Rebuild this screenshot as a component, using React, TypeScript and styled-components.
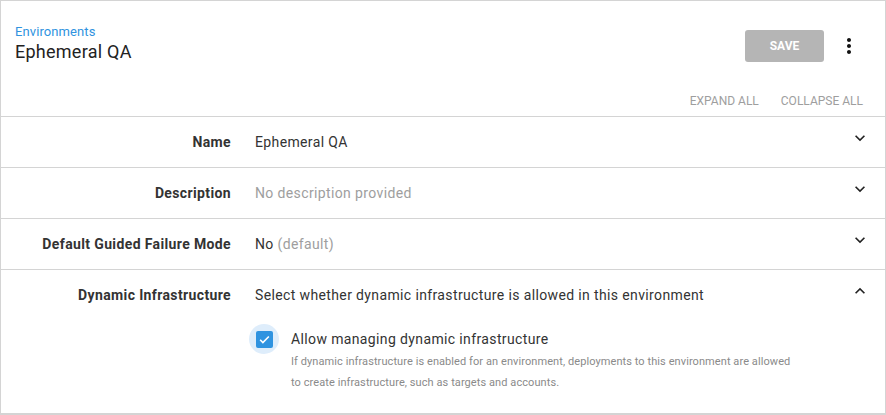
import React from "react";
import styled, { createGlobalStyle } from "styled-components";

const Global = createGlobalStyle`
  html, body { margin: 0; padding: 0; background: #ffffff; }
  body { font-family: Roboto, "Noto Sans", Arial, sans-serif; color: #333333; }
  * { box-sizing: border-box; }
`;

const Card = styled.div`
  width: 886px;
  height: 415px;
  border: 1px solid #d4d4d4;
  border-bottom-width: 2px;
  background: #fff;
  display: flex;
  flex-direction: column;
  overflow: hidden;
`;

const Header = styled.div`
  display: flex;
  align-items: flex-start;
  justify-content: space-between;
  padding: 23px 24px 0 14px;
  height: 85px;
`;

const TitleBlock = styled.div`
  display: flex;
  flex-direction: column;
`;

const Breadcrumb = styled.a`
  font-size: 13px;
  line-height: 16px;
  letter-spacing: 0.1px;
  color: #2f93e0;
  text-decoration: none;
`;

const Title = styled.h1`
  margin: 0;
  font-size: 18px;
  line-height: 24px;
  font-weight: 400;
  letter-spacing: 0.25px;
  color: #222;
`;

const HeaderActions = styled.div`
  display: flex;
  align-items: center;
  gap: 13px;
  margin-top: 6px;
`;

const SaveButton = styled.button`
  width: 79px;
  height: 32px;
  border: none;
  border-radius: 3px;
  background: #b5b5b5;
  color: #fff;
  font-family: Roboto, sans-serif;
  font-weight: 700;
  font-size: 12px;
  letter-spacing: 0;
`;

const IconButton = styled.span`
  width: 24px;
  height: 24px;
  display: flex;
  align-items: center;
  justify-content: center;
  color: #111;
`;

const ActionsBar = styled.div`
  display: flex;
  justify-content: flex-end;
  align-items: center;
  gap: 22px;
  height: 30px;
  padding-right: 22px;
`;

const TextButton = styled.span`
  font-size: 12px;
  color: #9e9e9e;
  text-transform: uppercase;
`;

const Row = styled.div<{ $grow?: boolean }>`
  display: grid;
  grid-template-columns: 230px 1fr 50px;
  border-top: 1px solid #d4d4d4;
  padding: 16px 0;
  flex: ${(p) => (p.$grow ? 1 : "none")};
  letter-spacing: 0.37px;
`;

const Label = styled.div`
  text-align: right;
  font-size: 14px;
  line-height: 18px;
  font-weight: 700;
  color: #333;
`;

const Value = styled.div`
  padding-left: 24px;
  font-size: 14px;
  line-height: 18px;
  color: #333;
`;

const Muted = styled.span`
  color: #9e9e9e;
`;

const Chevron = styled.div`
  display: flex;
  justify-content: center;
  align-items: flex-start;
  height: 18px;
  margin-top: -5px;
  color: #222;
`;

const CheckRow = styled.div`
  display: flex;
  align-items: flex-start;
  margin-top: 20px;
  margin-left: -6px;
`;

const CheckHalo = styled.div`
  width: 30px;
  height: 30px;
  border-radius: 50%;
  background: #deedfb;
  display: flex;
  align-items: center;
  justify-content: center;
  flex: none;
`;

const CheckBox = styled.div`
  width: 17px;
  height: 17px;
  border-radius: 2px;
  background: #2f93e0;
  display: flex;
  align-items: center;
  justify-content: center;
`;

const CheckText = styled.div`
  margin-left: 12px;
  padding-top: 6px;
`;

const CheckLabel = styled.div`
  font-size: 14px;
  line-height: 18px;
  color: #333;
`;

const Help = styled.div`
  margin-top: 3px;
  font-size: 11px;
  line-height: 21px;
  letter-spacing: 0.08px;
  color: #8a8a8a;
  max-width: 503px;
`;

const ChevronDown = () => (
  <svg width="20" height="20" viewBox="0 0 24 24" fill="currentColor">
    <path d="M16.59 8.59L12 13.17 7.41 8.59 6 10l6 6 6-6z" />
  </svg>
);

const ChevronUp = () => (
  <svg width="20" height="20" viewBox="0 0 24 24" fill="currentColor">
    <path d="M12 8l-6 6 1.41 1.41L12 10.83l4.59 4.58L18 14z" />
  </svg>
);

const MoreVert = () => (
  <svg width="24" height="24" viewBox="0 0 24 24" fill="currentColor">
    <path d="M12 8c1.1 0 2-.9 2-2s-.9-2-2-2-2 .9-2 2 .9 2 2 2zm0 2c-1.1 0-2 .9-2 2s.9 2 2 2 2-.9 2-2-.9-2-2-2zm0 6c-1.1 0-2 .9-2 2s.9 2 2 2 2-.9 2-2-.9-2-2-2z" />
  </svg>
);

const Check = () => (
  <svg width="13" height="13" viewBox="0 0 24 24" fill="none" stroke="#fff" strokeWidth="3">
    <path d="M4 12.5l5 5L20 6.5" />
  </svg>
);

export default function App() {
  return (
    <>
      <Global />
      <Card>
        <Header>
          <TitleBlock>
            <Breadcrumb href="#">Environments</Breadcrumb>
            <Title>Ephemeral QA</Title>
          </TitleBlock>
          <HeaderActions>
            <SaveButton>SAVE</SaveButton>
            <IconButton>
              <MoreVert />
            </IconButton>
          </HeaderActions>
        </Header>
        <ActionsBar>
          <TextButton>Expand all</TextButton>
          <TextButton>Collapse all</TextButton>
        </ActionsBar>
        <Row>
          <Label>Name</Label>
          <Value>Ephemeral QA</Value>
          <Chevron>
            <ChevronDown />
          </Chevron>
        </Row>
        <Row>
          <Label>Description</Label>
          <Value>
            <Muted>No description provided</Muted>
          </Value>
          <Chevron>
            <ChevronDown />
          </Chevron>
        </Row>
        <Row>
          <Label>Default Guided Failure Mode</Label>
          <Value>
            No <Muted>(default)</Muted>
          </Value>
          <Chevron>
            <ChevronDown />
          </Chevron>
        </Row>
        <Row $grow>
          <Label>Dynamic Infrastructure</Label>
          <Value>
            Select whether dynamic infrastructure is allowed in this environment
            <CheckRow>
              <CheckHalo>
                <CheckBox>
                  <Check />
                </CheckBox>
              </CheckHalo>
              <CheckText>
                <CheckLabel>Allow managing dynamic infrastructure</CheckLabel>
                <Help>
                  If dynamic infrastructure is enabled for an environment, deployments to this environment are allowed
                  to create infrastructure, such as targets and accounts.
                </Help>
              </CheckText>
            </CheckRow>
          </Value>
          <Chevron>
            <ChevronUp />
          </Chevron>
        </Row>
      </Card>
    </>
  );
}
